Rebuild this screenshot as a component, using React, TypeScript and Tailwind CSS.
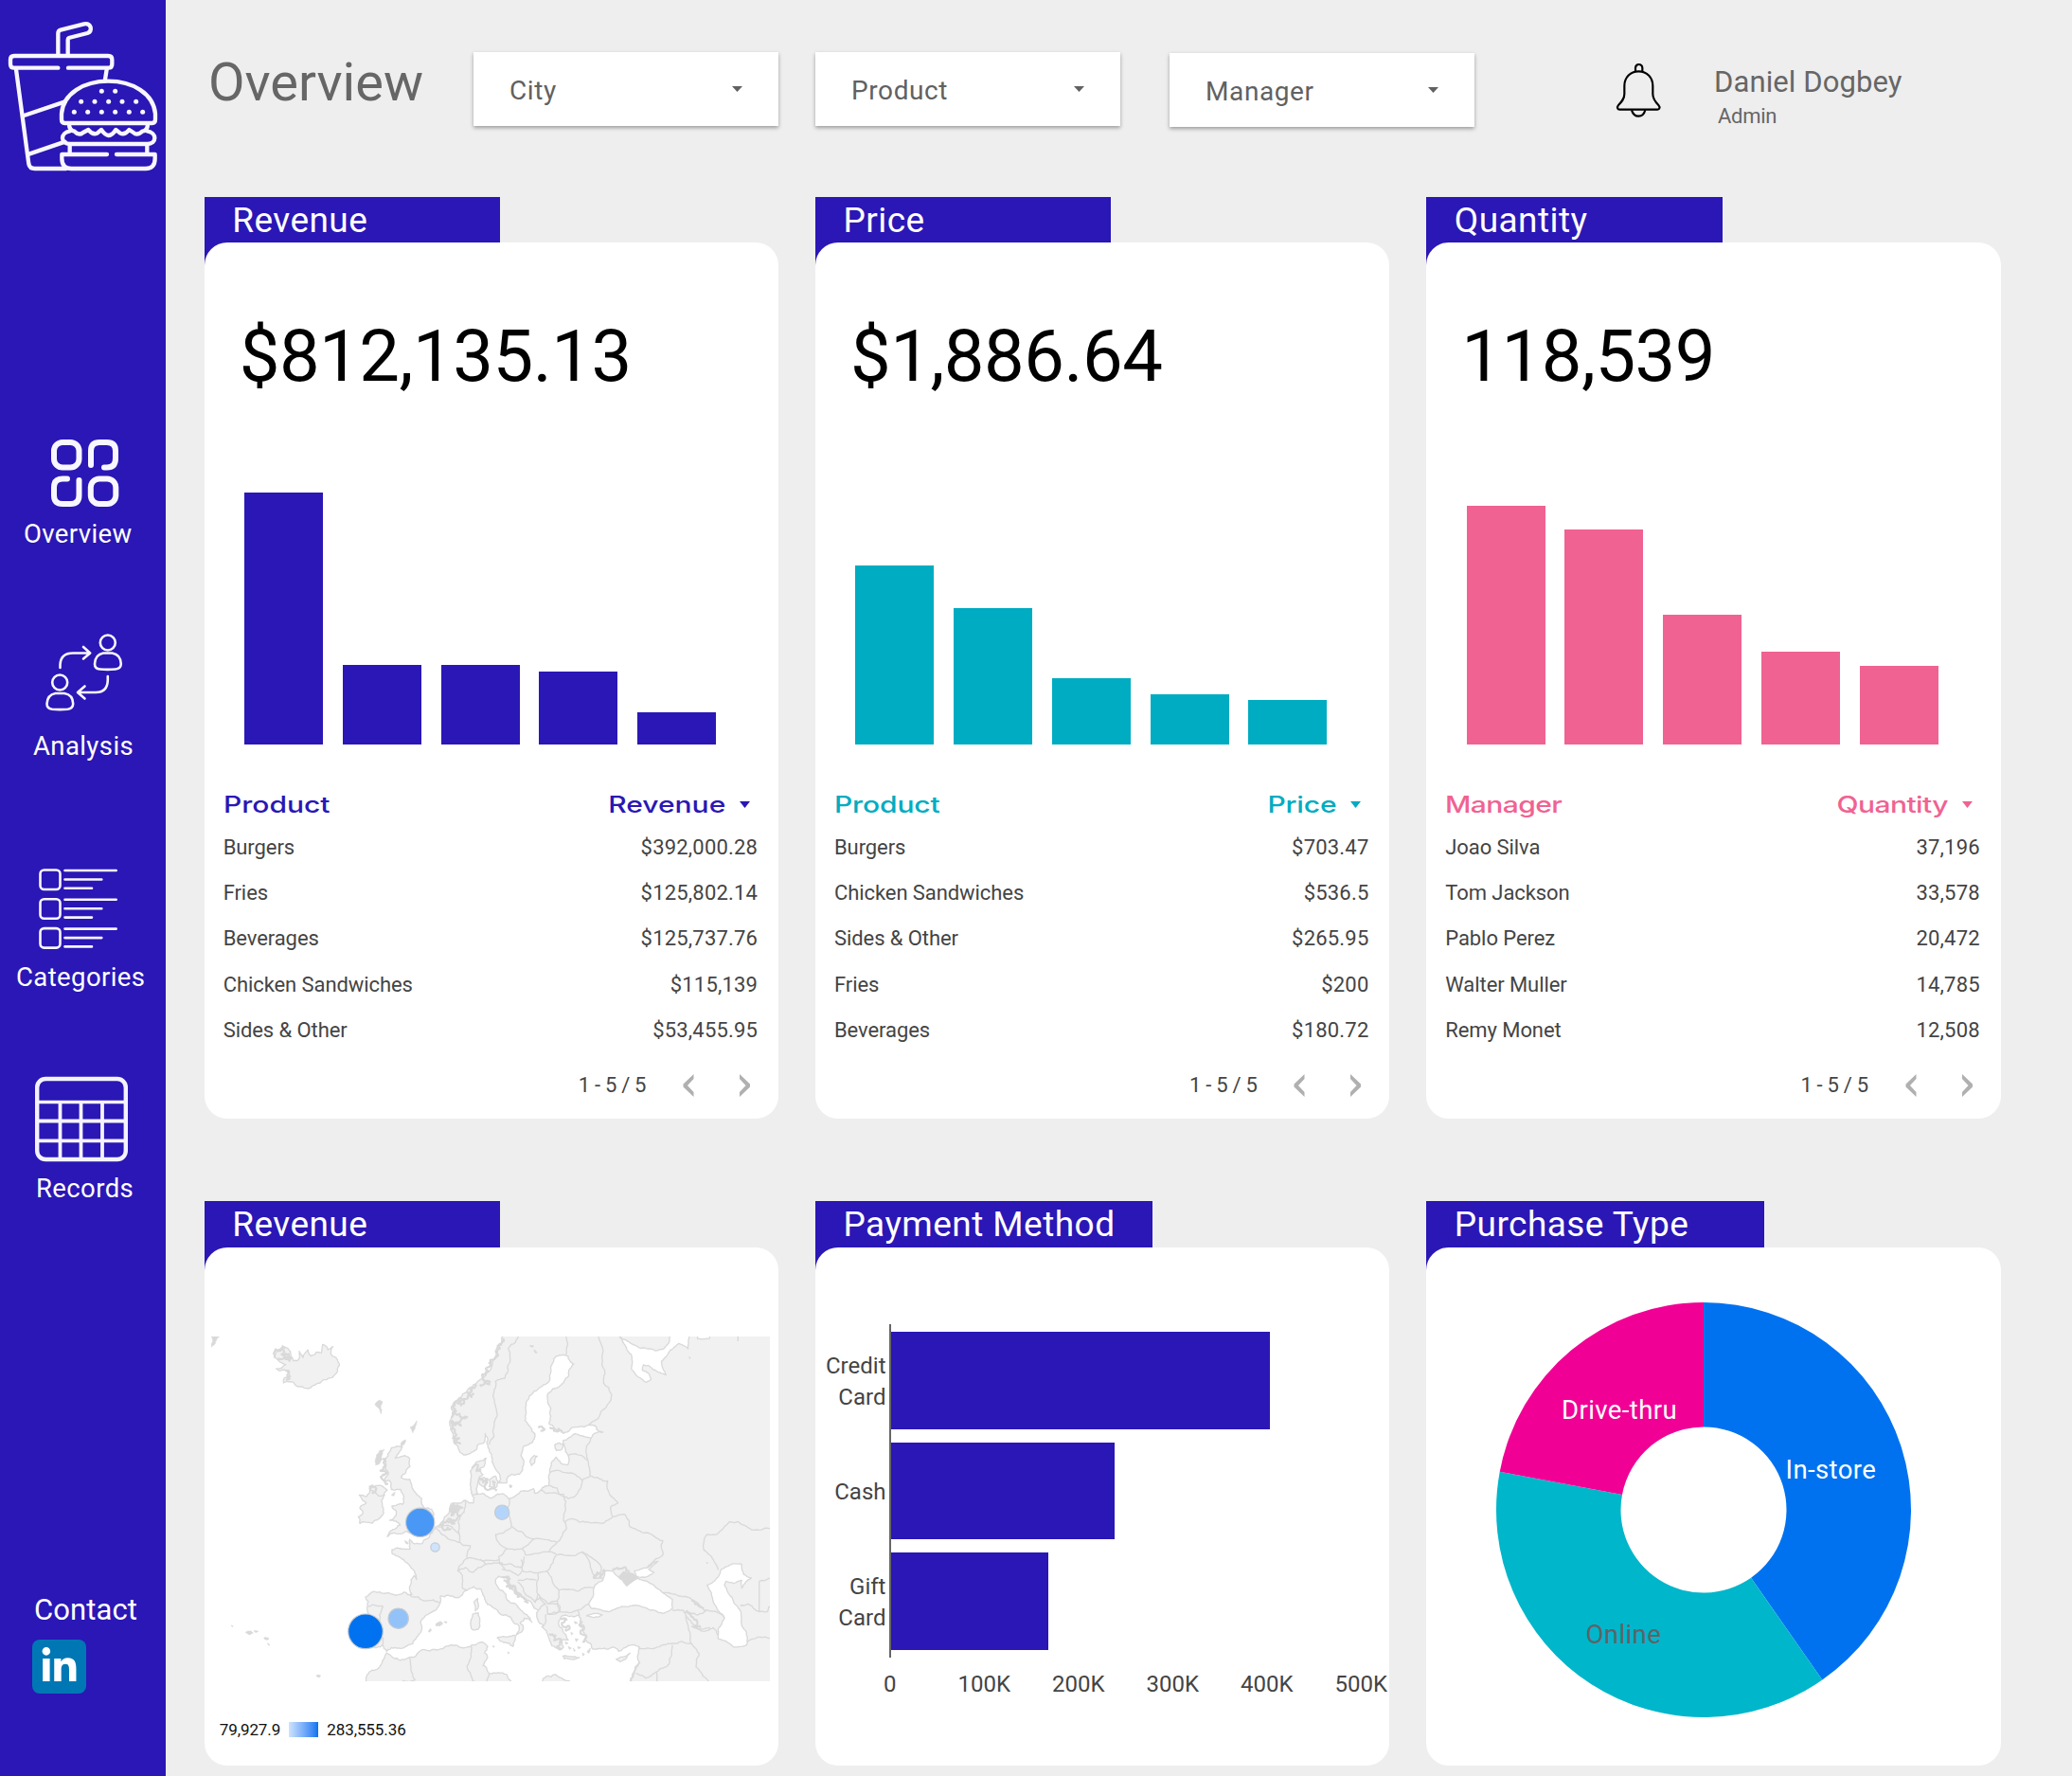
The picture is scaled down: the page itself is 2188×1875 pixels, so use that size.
import React from "react";
import { FaLinkedinIn } from "react-icons/fa";

type Row = [string, string];
type Pt = [number, number];

/* ---------- Sidebar ---------- */

function Logo() {
  const dots: Pt[] = [
    [322, 289], [365, 289],
    [257, 322], [300, 322], [344, 322], [387, 322], [431, 322],
    [235, 355], [278, 355], [322, 355], [365, 355], [409, 355], [452, 355],
  ];
  return (
    <svg className="block h-[190px] w-[175px]" viewBox="0 0 525 570" fill="none" stroke="#f8f6ff" strokeWidth="13" strokeLinecap="round" strokeLinejoin="round">
      <path d="M184 174V106Q184 97 192 95L266 76Q282 73 287 86Q290 100 277 105L218 120Q215 121 215 126V174" strokeLinecap="butt" />
      <path d="M184 215H45Q33 215 33 203V189Q33 177 45 177H343Q355 177 355 189V203Q355 215 343 215H216" />
      <path d="M51 220L91 519Q94 534 110 534H210" />
      <path d="M338 220L333 252" />
      <path d="M76 366L206 322M92 488L206 449" />
      <path d="M205 390Q195 390 195 378V360C200 296 266 257 343 257C420 257 486 296 492 360V378Q492 390 482 390Z" />
      <path d="M219 393C219 408 226 414 236 416Q250 431 263 420L280 411Q294 429 308 422L321 411Q333 428 344 429Q356 428 367 411L381 422Q395 429 409 411L423 420Q434 431 451 416C462 414 468 408 468 393" />
      <path d="M222 415C190 420 190 456 222 456H466C498 456 498 420 466 415" />
      <path d="M221 459V484M466 459V484" />
      <path d="M339 489H196V502Q196 534 226 534H462Q491 534 491 502V489H369" />
      {dots.map(([x, y]) => (
        <circle key={`${x}-${y}`} cx={x} cy={y} r="7.5" fill="#f8f6ff" stroke="none" />
      ))}
    </svg>
  );
}

function OverviewIcon() {
  return (
    <svg className="ml-[50px] mt-[270px] block size-20" viewBox="50 460 80 80" fill="none" stroke="#f8f6ff" strokeWidth="6" strokeLinecap="round">
      <rect x="57" y="467" width="26.5" height="26.5" rx="9" />
      <path d="M96 491V476Q96 467 105 467H113Q122 467 122 476V484Q122 493.500 113 493.500H110" />
      <path d="M71 505.500H66Q57 505.500 57 514.500V523Q57 532 66 532H74.500Q83.500 532 83.500 523V507" />
      <rect x="95.800" y="505.500" width="26.500" height="26.500" rx="9" />
    </svg>
  );
}

function AnalysisIcon() {
  return (
    <svg className="ml-[45px] mt-[87px] block size-[90px]" viewBox="45 665 90 90" fill="none" stroke="#f8f6ff" strokeWidth="2.600" strokeLinecap="round" strokeLinejoin="round">
      <circle cx="113.800" cy="678.500" r="8" />
      <path d="M109 689.500H118.500Q127.500 691 127.800 701Q127.500 706 122 706.500Q113.500 707.300 105.500 706.500Q100 706 100 701Q100.500 691 109 689.500Z" />
      <circle cx="63.200" cy="720.500" r="8" />
      <path d="M58.500 732H68Q77 733.500 77.200 743Q77 748 71.500 748.700Q63 749.500 55 748.700Q49.500 748 49.500 743Q50 733.500 58.500 732Z" />
      <path d="M63.500 705V702Q64 689.500 77 689.500H95M88 683L95.200 689.500L88 695.500" />
      <path d="M113.800 714V718Q113.500 731 101 731H82.500M89.500 724.500L82 731L89.500 737.500" />
    </svg>
  );
}

function CategoriesIcon() {
  return (
    <svg className="ml-[38px] mt-[111px] block h-[92px] w-[90px]" viewBox="38 913 90 92" fill="none" stroke="#f8f6ff" strokeWidth="2.600" strokeLinecap="round">
      {[0, 30.8, 61.6].map((y) => (
        <g key={y} transform={`translate(0 ${y})`}>
          <rect x="42.500" y="918.500" width="21" height="20.500" rx="4" />
          <path d="M68.500 919H122.700M68.500 928.500H107.300M68.500 937.800H97" />
        </g>
      ))}
    </svg>
  );
}

function RecordsIcon() {
  return (
    <svg className="ml-[33px] mt-[87px] block h-[97px] w-[106px]" viewBox="33 1133 106 97" fill="none" stroke="#f4f2ff" strokeWidth="4.400">
      <rect x="39.200" y="1139" width="93.600" height="85" rx="9" />
      <path d="M39 1163.500H133" strokeWidth="3.600" />
      <path d="M39 1183.500H133M39 1204.300H133M63.500 1163V1224M85.500 1163V1224M108 1163V1224" strokeWidth="3.800" />
    </svg>
  );
}

function Sidebar() {
  return (
    <aside className="flex w-[175px] shrink-0 flex-col bg-[#2a17b5] text-[27.500px] leading-7 tracking-[0.400px] text-white">
      <Logo />
      <OverviewIcon />
      <span className="ml-[25px] mt-[10px]">Overview</span>
      <AnalysisIcon />
      <span className="ml-[35px] mt-[19px]">Analysis</span>
      <CategoriesIcon />
      <span className="ml-[17px] mt-[13px]">Categories</span>
      <RecordsIcon />
      <span className="ml-[38px] mt-[11px]">Records</span>
      <span className="ml-[36px] mt-[416px] text-[31px] leading-[30px] tracking-[0.100px]">Contact</span>
      <a className="ml-[34px] mt-[16px] flex size-[57px] items-center justify-center rounded-lg bg-[#0077b5]">
        <FaLinkedinIn className="size-[41px]" />
      </a>
    </aside>
  );
}

/* ---------- Header ---------- */

function Select({ label, className }: { label: string; className: string }) {
  return (
    <div className={`flex h-[78px] w-[322px] shrink-0 items-center justify-between bg-white pl-[38px] pr-[38.500px] shadow-[0_2px_4px_rgba(0,0,0,0.35)] ${className}`}>
      <span className="mt-[3px] text-[28px] leading-none tracking-[0.600px] text-[#616161]">{label}</span>
      <svg className="block h-[6px] w-[11px]" viewBox="0 0 11 6" fill="#616161">
        <path d="M0 0H11L5.500 6Z" />
      </svg>
    </div>
  );
}

function Bell() {
  return (
    <svg className="ml-[147px] mt-[64px] block h-[63px] w-[52px] shrink-0" viewBox="612 72 156 189" fill="none" stroke="#000" strokeWidth="6.500" strokeLinejoin="round">
      <path d="M681 107V95Q682 84 691.500 84Q702 84 703 95V107" />
      <path d="M691 106C664 106 646 126 646 152V178C646 194 637 203 627 213Q622 219 625 224Q626 227 631 227H751Q756 227 757 223Q759 219 754 213C744 203 736 194 736 178V152C736 126 718 106 691 106Z" />
      <path d="M669 229Q675 248 691 248Q707 248 712 229" />
    </svg>
  );
}

function Header() {
  return (
    <header className="flex h-[207.500px] items-start text-[#666]">
      <h1 className="ml-[45px] mt-[59px] w-[280px] shrink-0 text-[56px] leading-none">Overview</h1>
      <Select label="City" className="mt-[55px]" />
      <Select label="Product" className="ml-[39px] mt-[55px]" />
      <Select label="Manager" className="ml-[52px] mt-[56px]" />
      <Bell />
      <div className="ml-[54px] mt-[71px] flex flex-col whitespace-nowrap">
        <span className="text-[31px] leading-none tracking-[0.100px]">Daniel Dogbey</span>
        <span className="ml-[4px] mt-[9.500px] text-[22px] leading-none tracking-[-0.300px]">Admin</span>
      </div>
    </header>
  );
}

/* ---------- Cards ---------- */

function Section({ title, tab, card, children }: { title: string; tab: string; card: string; children: React.ReactNode }) {
  return (
    <section className="w-[606.500px]">
      <div className={`h-[78px] bg-[#2a17b5] pl-[29.500px] pt-[7px] text-[37px] leading-[36px] tracking-[0.450px] text-white ${tab}`}>{title}</div>
      <div className={`relative -mt-[29.500px] overflow-hidden rounded-3xl bg-white ${card}`}>{children}</div>
    </section>
  );
}

type MetricProps = {
  title: string;
  total: string;
  bars: number[];
  barColor: string;
  textColor: string;
  left: string;
  right: string;
  rows: Row[];
};

function MetricCard({ title, total, bars, barColor, textColor, left, right, rows }: MetricProps) {
  return (
    <Section title={title} tab="w-[312.500px]" card="h-[925px]">
      <div className="ml-[37px] mt-[82.500px] text-[76px] leading-[75px] tracking-[-0.500px] text-black">{total}</div>
      <div className="ml-[42.300px] mt-[102px] flex h-[270px] items-end gap-[20.800px]">
        {bars.map((h, i) => (
          <div key={i} className={`w-[83px] ${barColor}`} style={{ height: h }} />
        ))}
      </div>
      <div className={`mt-[50px] flex h-7 items-center justify-between pl-[20px] pr-[30px] font-['Inter'] text-[24px] font-medium leading-7 ${textColor}`}>
        <span className="origin-left scale-x-125">{left}</span>
        <span className="flex items-center gap-[15px]">
          <span className="origin-right scale-x-125">{right}</span>
          <svg className="block h-[7px] w-[11px]" viewBox="0 0 11 7" fill="currentColor">
            <path d="M0 0H11L5.500 7Z" />
          </svg>
        </span>
      </div>
      <div className="mt-[6.500px] pl-[20px] pr-[22px] text-[22px] text-[#444]">
        {rows.map(([name, value]) => (
          <div key={name} className="flex h-[48.400px] items-center justify-between">
            <span className="tracking-[-0.080px]">{name}</span>
            <span className="tracking-[0.200px]">{value}</span>
          </div>
        ))}
      </div>
      <div className="mt-[20px] flex h-7 items-center justify-end pr-[29px] text-[22px] leading-7 text-[#444]">
        <span className="tracking-[-0.300px]">1 - 5 / 5</span>
        <svg className="ml-[39px] block h-[24px] w-[12px]" viewBox="0 0 12 24" fill="#b0b0b0">
          <path d="M11.500 0V5L5 12L11.500 19V24L0.500 13.500V10.500Z" />
        </svg>
        <svg className="ml-[47px] block h-[24px] w-[13px]" viewBox="0 0 13 24" fill="#b0b0b0">
          <path d="M1 0V5L7.500 12L1 19V24L12 13.500V10.500Z" />
        </svg>
      </div>
    </Section>
  );
}

/* ---------- Map ---------- */

/* Adds fractal detail between control points so coasts look natural. */
function rough(pts: number[], amount: number, closed: boolean): string {
  let seed = Math.abs(Math.round(pts[0] * 31 + pts[1] * 17)) + 7;
  const rnd = () => {
    seed = (seed * 16807) % 2147483647;
    return seed / 2147483647 - 0.5;
  };
  let list: Pt[] = [];
  for (let i = 0; i < pts.length; i += 2) list.push([pts[i], pts[i + 1]]);
  if (closed) list.push(list[0]);
  for (let k = 0; k < 3; k++) {
    const next: Pt[] = [list[0]];
    for (let i = 1; i < list.length; i++) {
      const [ax, ay] = list[i - 1];
      const [bx, by] = list[i];
      const dx = bx - ax;
      const dy = by - ay;
      const len = Math.hypot(dx, dy);
      if (len > 7 && len < 240) {
        const t = rnd() * amount;
        next.push([(ax + bx) / 2 - dy * t, (ay + by) / 2 + dx * t]);
      }
      next.push([bx, by]);
    }
    list = next;
  }
  return "M" + list.map(([x, y]) => `${x.toFixed(1)} ${y.toFixed(1)}`).join("L") + (closed ? "Z" : "");
}

const MAINLAND = [
  965, 55, 948, 95, 940, 130, 925, 165, 905, 190, 880, 210, 850, 235, 830, 255, 800, 285, 800, 320, 795, 345, 805, 370, 808, 400, 825, 425,
  845, 438, 862, 432, 885, 405, 905, 397, 907, 370, 912, 400, 920, 420, 930, 450, 945, 490, 950, 527, 975, 527, 980, 505, 1015, 500,
  1025, 480, 1020, 440, 1030, 410, 1055, 400, 1065, 372, 1050, 350, 1033, 330, 1035, 290, 1048, 250, 1080, 225, 1105, 210, 1115, 165,
  1132, 125, 1170, 125, 1188, 150, 1175, 165, 1160, 200, 1135, 225, 1110, 240, 1115, 290, 1110, 340, 1135, 358, 1155, 370, 1200, 350,
  1235, 343, 1255, 345, 1260, 358, 1280, 366, 1260, 368, 1242, 385, 1215, 378, 1180, 380, 1155, 392, 1160, 415, 1170, 440, 1168, 470,
  1145, 462, 1132, 445, 1115, 475, 1110, 500, 1108, 535, 1082, 550, 1065, 560, 1060, 545, 1035, 552, 980, 575, 955, 562, 925, 575,
  905, 562, 880, 560, 880, 550, 885, 520, 900, 500, 890, 480, 905, 470, 910, 448, 875, 468, 860, 490, 862, 540, 872, 575, 870, 590,
  845, 582, 800, 592, 793, 620, 770, 650, 748, 668, 735, 685, 720, 705, 708, 718, 680, 718, 668, 705, 670, 735, 640, 735, 612, 738, 612, 750,
  640, 765, 665, 785, 682, 805, 690, 832, 682, 820, 675, 880, 625, 882, 590, 876, 555, 870, 528, 888, 535, 915, 537, 940, 535, 960,
  530, 990, 540, 1030, 545, 1045, 582, 1040, 595, 1060, 610, 1048, 655, 1045, 690, 1015, 705, 995, 702, 970, 730, 940, 765, 905,
  765, 885, 790, 882, 830, 885, 870, 855, 895, 865, 905, 895, 930, 920, 960, 945, 995, 965, 1015, 990, 1005, 1010, 1020, 1000,
  1028, 985, 1018, 970, 1030, 955, 1055, 968, 1050, 955, 1020, 930, 985, 905, 965, 870, 940, 840, 950, 822, 965, 825, 985, 855,
  1020, 885, 1055, 910, 1075, 930, 1075, 965, 1095, 990, 1110, 1020, 1140, 1055, 1155, 1048, 1142, 1022, 1170, 1025, 1155, 1000,
  1140, 965, 1160, 945, 1200, 945, 1210, 955, 1215, 985, 1225, 1020, 1245, 1050, 1285, 1050, 1330, 1060, 1395, 1045, 1390, 1080,
  1380, 1130, 1368, 1165, 1820, 1165, 1820, 55,
];

const LANDS: number[][] = [
  [525, 1165, 540, 1125, 575, 1105, 595, 1065, 615, 1080, 665, 1080, 715, 1055, 780, 1045, 830, 1048, 865, 1040, 905, 1035, 915, 1045, 905, 1065, 915, 1080, 900, 1105, 920, 1130, 975, 1133, 1003, 1165],
  [1080, 1165, 1100, 1140, 1130, 1133, 1150, 1145, 1190, 1165],
  [610, 415, 645, 412, 635, 430, 622, 448, 668, 450, 655, 495, 640, 508, 668, 515, 680, 550, 705, 575, 712, 605, 738, 610, 745, 640, 730, 665, 740, 685, 700, 690, 660, 680, 620, 685, 597, 697, 625, 670, 638, 660, 605, 645, 625, 630, 612, 600, 645, 595, 650, 570, 640, 548, 610, 548, 605, 520, 585, 520, 600, 500, 590, 480, 590, 455],
  [508, 565, 530, 570, 545, 545, 575, 535, 597, 550, 585, 570, 585, 610, 580, 630, 510, 655, 505, 635, 520, 620, 510, 605, 530, 590],
  [240, 130, 265, 92, 290, 110, 300, 140, 312, 140, 318, 110, 330, 130, 345, 105, 355, 125, 372, 112, 388, 115, 392, 88, 408, 105, 425, 95, 418, 118, 440, 140, 445, 155, 430, 185, 405, 200, 375, 212, 345, 228, 315, 222, 300, 208, 268, 210, 270, 195, 290, 190, 275, 170, 245, 165, 275, 152],
  [868, 942, 885, 938, 890, 955, 885, 990, 868, 992, 862, 960],
  [872, 905, 884, 893, 884, 925, 876, 932],
  [945, 1017, 985, 1012, 1002, 1010, 995, 1045, 965, 1032],
  [1322, 1085, 1342, 1078, 1366, 1066, 1350, 1086, 1334, 1093],
  [1153, 1075, 1180, 1077, 1205, 1080, 1190, 1086, 1158, 1084],
  [1050, 455, 1062, 440, 1072, 442, 1062, 465, 1054, 472],
  [1127, 408, 1142, 400, 1158, 404, 1150, 420, 1132, 424],
  [888, 515, 905, 510, 915, 525, 905, 540, 890, 532],
  [920, 518, 940, 505, 948, 525, 935, 545, 920, 538],
];

const SEAS: number[][] = [
  [1327, 55, 1350, 90, 1370, 120, 1370, 165, 1390, 190, 1415, 208, 1432, 200, 1425, 180, 1405, 170, 1408, 153, 1425, 155, 1440, 168, 1480, 185, 1465, 142, 1495, 105, 1520, 85, 1550, 102, 1555, 55, 1497, 55, 1488, 85, 1475, 100, 1445, 108, 1400, 100, 1365, 82, 1340, 70],
  [1580, 55, 1580, 70, 1617, 70, 1620, 55],
  [1285, 805, 1310, 805, 1330, 825, 1355, 850, 1385, 830, 1420, 838, 1450, 860, 1470, 875, 1500, 895, 1500, 925, 1470, 940, 1430, 930, 1375, 915, 1340, 918, 1300, 935, 1245, 925, 1235, 910, 1250, 880, 1255, 850, 1280, 835],
  [1380, 805, 1420, 795, 1455, 775, 1425, 800, 1442, 810, 1415, 825, 1385, 822],
  [1655, 800, 1690, 783, 1720, 785, 1725, 815, 1750, 828, 1720, 860, 1720, 835, 1695, 845, 1670, 838, 1665, 850, 1690, 890, 1715, 930, 1720, 980, 1735, 1000, 1735, 1040, 1695, 1047, 1645, 1020, 1645, 990, 1665, 955, 1630, 905, 1610, 850, 1645, 825],
  [1228, 948, 1250, 940, 1278, 945, 1250, 953],
];

const BORDERS_EAST: number[][] = [
  [145, 55, 110, 100, 112, 150, 100, 195, 70, 205, 65, 260, 75, 315, 65, 380, 50, 405],
  [290, 55, 293, 122],
  [390, 55, 407, 130, 412, 210, 438, 248, 410, 295, 365, 343],
  [372, 385, 358, 410, 362, 455, 370, 505],
  [300, 440, 325, 435, 362, 455],
  [240, 495, 310, 495, 345, 518, 370, 505],
  [345, 518, 330, 560, 300, 577, 270, 560, 265, 543, 240, 535],
  [212, 550, 230, 560, 285, 562],
  [370, 505, 410, 520, 425, 520, 430, 560, 458, 590, 435, 602, 440, 635],
  [290, 650, 310, 640, 360, 650, 415, 652, 440, 635],
  [285, 562, 292, 610, 285, 645, 295, 670, 265, 715],
  [440, 635, 480, 627, 495, 665, 540, 685, 600, 710, 600, 755, 560, 785, 550, 795],
  [112, 575, 108, 610, 120, 665, 150, 680, 190, 705, 265, 715],
  [120, 668, 70, 690, 80, 715, 105, 735, 155, 735, 190, 705],
  [155, 735, 165, 755, 240, 745, 265, 715],
  [240, 745, 265, 755, 310, 757, 345, 745, 400, 785, 405, 805, 385, 830],
  [345, 745, 370, 790, 385, 830, 410, 830],
  [105, 735, 80, 760, 85, 785, 150, 795, 160, 760],
  [150, 770, 155, 805, 205, 812, 240, 800, 262, 757],
  [230, 805, 250, 840, 270, 865, 330, 870, 380, 858],
  [270, 865, 265, 900, 275, 935, 330, 930, 365, 910],
  [205, 812, 200, 845, 205, 880, 235, 910, 265, 900],
  [140, 835, 200, 835],
  [140, 840, 165, 880, 195, 905, 205, 880],
  [90, 800, 140, 820, 155, 805],
  [235, 910, 265, 910, 270, 935, 235, 943, 230, 915],
  [195, 905, 210, 890, 228, 910, 205, 930],
  [230, 943, 225, 975, 215, 985],
  [235, 943, 275, 935],
  [330, 930, 335, 950],
  [600, 875, 650, 885, 690, 895, 730, 930, 770, 935, 795, 955],
  [630, 930, 665, 930, 680, 980, 690, 1035, 630, 1035, 575, 1050, 525, 1050],
  [665, 937, 710, 945, 740, 930],
  [675, 950, 700, 985, 725, 990, 750, 985],
  [690, 980, 720, 995, 760, 985, 775, 1010],
  [690, 1035, 715, 1070, 705, 1110, 750, 1165],
  [630, 1040, 620, 1100, 580, 1125, 580, 1165],
  [515, 1130, 545, 1145, 580, 1125],
  [500, 1155, 512, 1110, 528, 1095],
  [945, 670, 880, 675, 840, 650, 810, 650, 770, 690, 740, 690, 730, 740, 760, 770, 775, 802],
  [945, 828, 905, 838],
  [905, 935, 870, 910, 845, 915],
  [905, 935, 930, 935, 945, 910],
  [865, 1030, 900, 1015, 945, 1018],
];

const BORDERS_WEST: number[][] = [
  [668, 882, 720, 900, 765, 905],
  [537, 918, 583, 918, 572, 945, 575, 1000, 582, 1040],
  [748, 668, 770, 690, 825, 715, 860, 725, 850, 765, 820, 805, 835, 820, 835, 860, 850, 868],
  [755, 665, 800, 665, 825, 690, 825, 715],
  [845, 582, 840, 620, 822, 650, 825, 690],
  [850, 765, 885, 770, 950, 770],
  [820, 805, 845, 795, 865, 810, 910, 785, 890, 768],
  [910, 785, 960, 780, 970, 800],
  [868, 565, 885, 562],
  [540, 550, 570, 568, 590, 565],
  [665, 1080, 672, 1120, 685, 1150, 645, 1152],
  [862, 1040, 862, 1080, 850, 1105, 880, 1165],
  [920, 1130, 905, 1165],
];

/* Fjords, archipelagos and small islands. */
const FRINGE: number[][] = [
  [962, 70, 950, 90, 945, 110, 938, 130, 925, 155, 915, 175, 900, 200, 920, 215, 890, 215],
  [880, 215, 865, 225, 850, 240, 870, 245, 835, 262, 820, 265, 840, 275, 805, 285, 815, 300, 802, 318, 850, 318, 803, 330, 830, 345, 802, 340, 812, 370, 805, 385, 825, 385, 812, 402, 828, 405],
  [240, 130, 270, 100, 262, 120, 285, 118, 275, 135, 295, 130, 250, 132],
  [275, 170, 285, 180, 278, 200, 290, 195],
  [580, 425, 570, 440, 575, 455, 562, 468],
  [582, 450, 590, 470, 575, 488, 598, 495, 582, 515, 600, 530],
  [540, 548, 550, 535, 560, 550, 548, 560],
  [795, 600, 820, 598, 800, 615, 835, 605, 800, 630, 830, 630, 790, 640, 810, 655, 765, 660, 800, 672],
  [890, 510, 900, 525, 915, 515, 905, 540, 925, 545, 930, 520],
  [865, 480, 885, 470, 880, 490, 895, 485],
  [965, 835, 980, 845, 975, 855, 1000, 870, 1010, 888, 1030, 890, 1045, 905],
  [960, 825, 985, 830, 975, 842, 990, 855, 1005, 868, 1020, 880],
  [1110, 1005, 1130, 1010, 1125, 1025, 1150, 1030, 1135, 1045, 1150, 1055],
  [1145, 955, 1165, 960, 1150, 970, 1175, 985, 1160, 990],
  [1215, 965, 1205, 975, 1220, 990, 1210, 1005, 1228, 1015, 1215, 1030],
  [1112, 350, 1125, 362, 1140, 355, 1150, 368],
  [1075, 352, 1085, 348, 1095, 358, 1082, 362],
  [1250, 830, 1262, 810, 1270, 825, 1285, 800],
  [1310, 800, 1330, 800, 1345, 795, 1365, 808],
  [1545, 930, 1560, 950, 1575, 960, 1570, 980, 1590, 985],
  [1560, 900, 1580, 910, 1600, 925],
];

const SPECKS: number[][] = [
  [558, 280, 572, 265, 582, 270, 576, 285, 578, 308, 570, 290],
  [690, 330, 685, 350, 678, 368, 670, 350, 680, 345],
  [640, 400, 655, 390, 650, 405, 640, 412],
  [560, 450, 572, 425, 588, 420, 578, 440, 560, 470],
  [39, 63, 65, 63, 55, 75, 39, 97],
  [148, 1000, 165, 996, 172, 1002, 158, 1007],
  [174, 996, 188, 997, 180, 1001],
  [206, 1017, 221, 1018, 220, 1023, 209, 1022],
  [218, 1034, 225, 1041, 221, 1041],
  [372, 1136, 385, 1136, 384, 1141, 375, 1141],
  [102, 978, 108, 980, 106, 983],
  [727, 997, 734, 988, 737, 994, 731, 1000],
  [750, 975, 765, 965, 773, 972, 762, 980, 752, 980],
  [776, 967, 786, 966, 784, 971],
  [930, 1043, 937, 1044, 934, 1048],
  [978, 1062, 984, 1065, 980, 1068],
  [652, 710, 658, 712, 664, 720, 658, 720],
  [610, 565, 622, 556, 618, 568],
  [935, 545, 945, 548, 942, 553],
  [984, 533, 992, 535, 990, 542, 984, 540],
  [1048, 92, 1060, 92, 1058, 97],
  [1062, 105, 1072, 115, 1066, 115],
  [1553, 128, 1558, 130, 1555, 134],
  [1608, 778, 1613, 780, 1610, 783],
  [1178, 1000, 1186, 1004, 1180, 1008],
  [1190, 965, 1200, 970, 1192, 973],
  [1192, 1020, 1202, 1022, 1195, 1030],
  [1170, 1045, 1180, 1050, 1174, 1054],
  [1185, 1050, 1193, 1058, 1188, 1060],
  [1200, 1045, 1210, 1048, 1204, 1053],
  [1160, 1030, 1170, 1034, 1163, 1038],
  [1230, 1062, 1240, 1050, 1236, 1066],
  [1215, 1065, 1222, 1070, 1217, 1075],
];

const CITIES = [
  { x: 528, y: 997, r: 55, fill: "#0072f0" },
  { x: 632, y: 956, r: 32, fill: "#93c2f9" },
  { x: 701, y: 652, r: 45.5, fill: "#4a98f5" },
  { x: 748.5, y: 730.5, r: 14, fill: "#cfe3fc" },
  { x: 960.5, y: 620, r: 23, fill: "#b4d5fb" },
];

function EuropeMap() {
  return (
    <svg className="ml-[7px] mt-[94px] block h-[364px] w-[590px]" viewBox="39 63 1770 1092" preserveAspectRatio="none" strokeLinejoin="round">
      <g fill="#f1f1f1" stroke="#d9d9d9" strokeWidth="4">
        <path d={rough(MAINLAND, 0.38, true)} />
        {LANDS.map((p, i) => (
          <path key={i} d={rough(p, 0.35, true)} />
        ))}
        <g fill="#fff">
          {SEAS.map((p, i) => (
            <path key={i} d={rough(p, 0.2, true)} />
          ))}
        </g>
        <path d="M1330 825L1345 808L1376 815L1390 828L1372 840L1355 853L1345 835Z" fill="#d9d9d9" />
      </g>
      <g fill="none" stroke="#d9d9d9" strokeWidth="4">
        {BORDERS_WEST.map((p, i) => (
          <path key={i} d={rough(p, 0.3, false)} />
        ))}
        <g transform="translate(870 0)">
          {BORDERS_EAST.map((p, i) => (
            <path key={i} d={rough(p, 0.25, false)} />
          ))}
          <path d="M905 838V935M838 55V78" />
        </g>
      </g>
      <g fill="none" stroke="#d9d9d9" strokeWidth="6.500">
        {FRINGE.map((p, i) => (
          <path key={i} d={rough(p, 0.9, false)} />
        ))}
      </g>
      <g fill="#d9d9d9" stroke="#d9d9d9" strokeWidth="2">
        {SPECKS.map((p, i) => (
          <path key={i} d={rough(p, 0.3, true)} />
        ))}
      </g>
      {CITIES.map((c) => (
        <circle key={c.x} cx={c.x} cy={c.y} r={c.r} fill={c.fill} stroke="#c4cad1" strokeWidth="3.500" />
      ))}
    </svg>
  );
}

function MapCard() {
  return (
    <Section title="Revenue" tab="w-[312.500px]" card="h-[547px]">
      <EuropeMap />
      <div className="ml-[16px] mt-[43px] flex items-center text-[17px] leading-[17px] tracking-[-0.080px] text-[#111]">
        <span>79,927.9</span>
        <div className="ml-[9px] h-[16px] w-[31px] bg-linear-to-r from-[#cfe3fc] to-[#0072f0]" />
        <span className="ml-[9px]">283,555.36</span>
      </div>
    </Section>
  );
}

/* ---------- Payment method ---------- */

function PaymentCard() {
  const bars = [
    { lines: ["Credit", "Card"], width: 400, top: "mt-[8px]", height: "h-[103px]" },
    { lines: ["Cash"], width: 236, top: "mt-[14px]", height: "h-[102px]" },
    { lines: ["Gift", "Card"], width: 166, top: "mt-[14px]", height: "h-[103px]" },
  ];
  return (
    <Section title="Payment Method" tab="w-[356.500px]" card="h-[547px]">
      <div className="mt-[81px] flex h-[352px] text-[24px] leading-[33px] text-[#444]">
        <div className="w-[78.500px] pr-[4px] text-right">
          {bars.map((b, i) => (
            <div key={i} className={`flex flex-col justify-center pt-[3px] ${b.top} ${b.height}`}>
              {b.lines.map((line) => (
                <span key={line}>{line}</span>
              ))}
            </div>
          ))}
        </div>
        <div className="border-l-2 border-[#666]">
          {bars.map((b, i) => (
            <div key={i} className={`bg-[#2a17b5] ${b.top} ${b.height}`} style={{ width: b.width }} />
          ))}
        </div>
      </div>
      <div className="-mr-4 ml-[29px] mt-[12.500px] flex text-center text-[24px] leading-[33px] text-[#444]">
        {["0", "100K", "200K", "300K", "400K", "500K"].map((t) => (
          <span key={t} className="w-[99.500px] shrink-0">
            {t}
          </span>
        ))}
      </div>
    </Section>
  );
}

/* ---------- Purchase type ---------- */

function slice(from: number, to: number): string {
  const at = (deg: number, r: number) => {
    const a = ((deg - 90) * Math.PI) / 180;
    return `${(r * Math.cos(a)).toFixed(2)} ${(r * Math.sin(a)).toFixed(2)}`;
  };
  return `M${at(from, 219)}A219 219 0 0 1 ${at(to, 219)}L${at(to, 87.5)}A87.5 87.5 0 0 0 ${at(from, 87.5)}Z`;
}

function PurchaseCard() {
  return (
    <Section title="Purchase Type" tab="w-[356.500px]" card="h-[547px]">
      <svg className="ml-[72.500px] mt-[57px] block size-[440px]" viewBox="-220 -220 440 440" fontSize="27.500" letterSpacing="0.4">
        <path d={slice(0, 145.1)} fill="#0072f0" />
        <path d={slice(145.1, 280.6)} fill="#00b6cb" />
        <path d={slice(280.6, 360)} fill="#f10096" />
        <text x="86.500" y="-33" fill="#fff">In-store</text>
        <text x="-150" y="-96" fill="#fff">Drive-thru</text>
        <text x="-124.500" y="140.500" fill="#5f6368">Online</text>
      </svg>
    </Section>
  );
}

/* ---------- Page ---------- */

export default function App() {
  return (
    <div className="flex h-[1875px] w-[2188px] overflow-hidden bg-[#eee] font-['Roboto',sans-serif]">
      <Sidebar />
      <main className="w-[2013px]">
        <Header />
        <div className="ml-[40.700px] grid w-[1896.900px] grid-cols-3 gap-x-[39px] gap-y-[87.300px]">
          <MetricCard
            title="Revenue"
            total="$812,135.13"
            bars={[265.5, 84, 84, 76.5, 34]}
            barColor="bg-[#2a17b5]"
            textColor="text-[#2a17b5]"
            left="Product"
            right="Revenue"
            rows={[
              ["Burgers", "$392,000.28"],
              ["Fries", "$125,802.14"],
              ["Beverages", "$125,737.76"],
              ["Chicken Sandwiches", "$115,139"],
              ["Sides & Other", "$53,455.95"],
            ]}
          />
          <MetricCard
            title="Price"
            total="$1,886.64"
            bars={[188.5, 143.5, 70, 53, 46.5]}
            barColor="bg-[#00acc1]"
            textColor="text-[#00acc1] tracking-[-0.100px]"
            left="Product"
            right="Price"
            rows={[
              ["Burgers", "$703.47"],
              ["Chicken Sandwiches", "$536.5"],
              ["Sides & Other", "$265.95"],
              ["Fries", "$200"],
              ["Beverages", "$180.72"],
            ]}
          />
          <MetricCard
            title="Quantity"
            total="118,539"
            bars={[251.5, 226.5, 137, 98, 82.5]}
            barColor="bg-[#f06292]"
            textColor="text-[#f06292] tracking-[-0.450px]"
            left="Manager"
            right="Quantity"
            rows={[
              ["Joao Silva", "37,196"],
              ["Tom Jackson", "33,578"],
              ["Pablo Perez", "20,472"],
              ["Walter Muller", "14,785"],
              ["Remy Monet", "12,508"],
            ]}
          />
          <MapCard />
          <PaymentCard />
          <PurchaseCard />
        </div>
      </main>
    </div>
  );
}
